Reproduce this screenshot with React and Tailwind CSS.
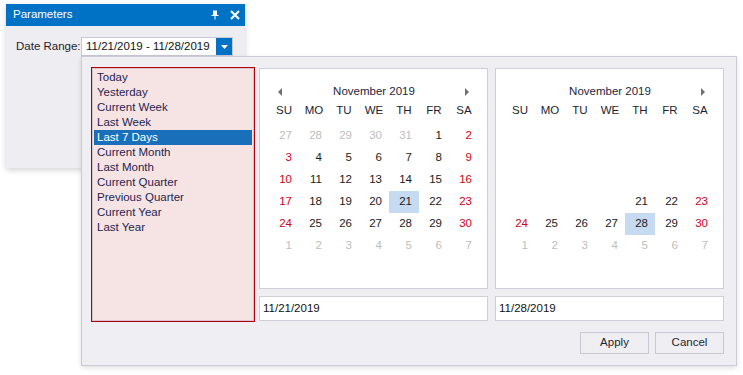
import { useState } from "react";

const FONT = { fontFamily: '"Liberation Sans", Arial, sans-serif' };

const PRESETS = ["Today", "Yesterday", "Current Week", "Last Week", "Last 7 Days", "Current Month", "Last Month", "Current Quarter", "Previous Quarter", "Current Year", "Last Year"];
const DAYS = ["SU", "MO", "TU", "WE", "TH", "FR", "SA"];

// one month grid, null = empty cell, {d, out} = day
function buildWeeks(hideBefore) {
  const cells = [];
  [27, 28, 29, 30, 31].forEach((d) => cells.push({ d, out: true }));
  for (let d = 1; d <= 30; d++) cells.push({ d, out: false });
  for (let d = 1; d <= 7; d++) cells.push({ d, out: true });
  const weeks = [];
  for (let i = 0; i < 6; i++) weeks.push(cells.slice(i * 7, i * 7 + 7));
  if (!hideBefore) return weeks;
  return weeks.map((w) => w.map((c) => (c.out && c.d > 20) || (!c.out && c.d < hideBefore) ? null : c));
}

function Arrow({ dir }) {
  return (
    <svg width="5" height="8" viewBox="0 0 5 8">
      {dir === "left" ? <path d="M4 0 L0 4 L4 8 Z" fill="#707070" /> : <path d="M1 0 L5 4 L1 8 Z" fill="#707070" />}
    </svg>
  );
}

function Calendar({ selected, hideBefore, showPrev }) {
  const weeks = buildWeeks(hideBefore);
  return (
    <div className="w-[229px] h-[221px] bg-white border border-[#cfcfdc] pt-[15px] pl-[9px]">
      <div className="relative h-[16px] w-[210px] flex items-center justify-center text-[11.5px] text-[#1e1e3c]">
        {showPrev && <span className="absolute left-[9px] top-[4px]"><Arrow dir="left" /></span>}
        November 2019
        <span className="absolute right-[10px] top-[4px]"><Arrow dir="right" /></span>
      </div>
      <div className="grid grid-cols-7 w-[210px] h-[22px] items-center text-[11.5px] text-[#1e1e2e]">
        {DAYS.map((d) => <span key={d} className="text-center">{d}</span>)}
      </div>
      <div className="mt-[3px] w-[210px]">
        {weeks.map((w, i) => (
          <div key={i} className="grid grid-cols-7 h-[22px]">
            {w.map((c, j) => {
              if (!c) return <span key={j} />;
              const weekend = j === 0 || j === 6;
              const color = c.out ? "text-[#bdbdbd]" : weekend ? "text-[#d40016]" : "text-[#1a1a1a]";
              const bg = !c.out && c.d === selected ? "bg-[#c6daf2]" : "";
              return <span key={j} className={`flex items-center justify-end pr-[7px] text-[11.5px] ${color} ${bg}`}>{c.d}</span>;
            })}
          </div>
        ))}
      </div>
    </div>
  );
}

export default function App() {
  const [active, setActive] = useState("Last 7 Days");
  return (
    <div className="relative w-[743px] h-[375px] bg-white overflow-hidden" style={FONT}>
      <div className="absolute left-[6px] top-[4px] w-[239px] h-[164px] bg-[#eeedf2] shadow-[0_2px_6px_rgba(0,0,0,0.18)]">
        <div className="h-[22px] bg-[#0072c6] flex items-center pl-[7px] pr-[5px] text-white text-[11.5px]">
          <span className="flex-1">Parameters</span>
          <svg width="10" height="10" viewBox="0 0 10 10" className="mr-[10px]">
            <path d="M3 0.5 H7 V5 H8.5 V6 H1.5 V5 H3 Z" fill="white" />
            <rect x="4.5" y="6" width="1" height="3.5" fill="white" />
          </svg>
          <svg width="10" height="10" viewBox="0 0 10 10">
            <path d="M1 1 L9 9 M9 1 L1 9" stroke="white" strokeWidth="2" />
          </svg>
        </div>
        <div className="flex items-center pl-[10px] mt-[11px] text-[11.5px] text-[#1e1e2e]">
          <span className="w-[65px] shrink-0 whitespace-nowrap">Date Range:</span>
          <div className="flex shrink-0 h-[19px] w-[152px] bg-white border border-[#c8c8d4]">
            <span className="flex-1 pl-[4px] leading-[17px] whitespace-nowrap text-[#111]">11/21/2019 - 11/28/2019</span>
            <div className="w-[16px] bg-[#0072c6] flex items-center justify-center">
              <svg width="7" height="4" viewBox="0 0 7 4"><path d="M0 0 H7 L3.5 4 Z" fill="white" /></svg>
            </div>
          </div>
        </div>
      </div>

      <div className="absolute left-[81px] top-[56px] w-[656px] h-[310px] bg-[#efeef3] border border-[#cacad6] shadow-[0_2px_5px_rgba(0,0,0,0.12)] pt-[10px] pl-[9px] flex gap-[4px] text-[11.5px]">
        <div className="w-[164px] h-[255px] border border-[#b0000c] bg-[#f6e4e4]">
          <div className="h-full border border-[#d8c4c8] p-[1px]">
            {PRESETS.map((p) => (
              <div key={p} onClick={() => setActive(p)} className={`h-[15px] leading-[15px] pl-[3px] ${p === active ? "bg-[#1a6fba] text-white" : "text-[#1e1e50]"}`}>{p}</div>
            ))}
          </div>
        </div>
        <div className="flex flex-col mt-[1px]">
          <div className="flex gap-[7px]">
            <Calendar selected={21} showPrev />
            <Calendar selected={28} hideBefore={21} />
          </div>
          <div className="flex gap-[7px] mt-[7px]">
            <div className="w-[229px] h-[25px] bg-white border border-[#cfcfdc] pl-[3px] leading-[23px] text-[#111]">11/21/2019</div>
            <div className="w-[229px] h-[25px] bg-white border border-[#cfcfdc] pl-[3px] leading-[23px] text-[#111]">11/28/2019</div>
          </div>
          <div className="flex justify-end gap-[6px] mt-[11px]">
            <button className="w-[69px] h-[22px] border border-[#c8c8d4] bg-[#efeef3] text-[#1e1e2e] text-[11.5px]">Apply</button>
            <button className="w-[69px] h-[22px] border border-[#c8c8d4] bg-[#efeef3] text-[#1e1e2e] text-[11.5px]">Cancel</button>
          </div>
        </div>
      </div>
    </div>
  );
}
